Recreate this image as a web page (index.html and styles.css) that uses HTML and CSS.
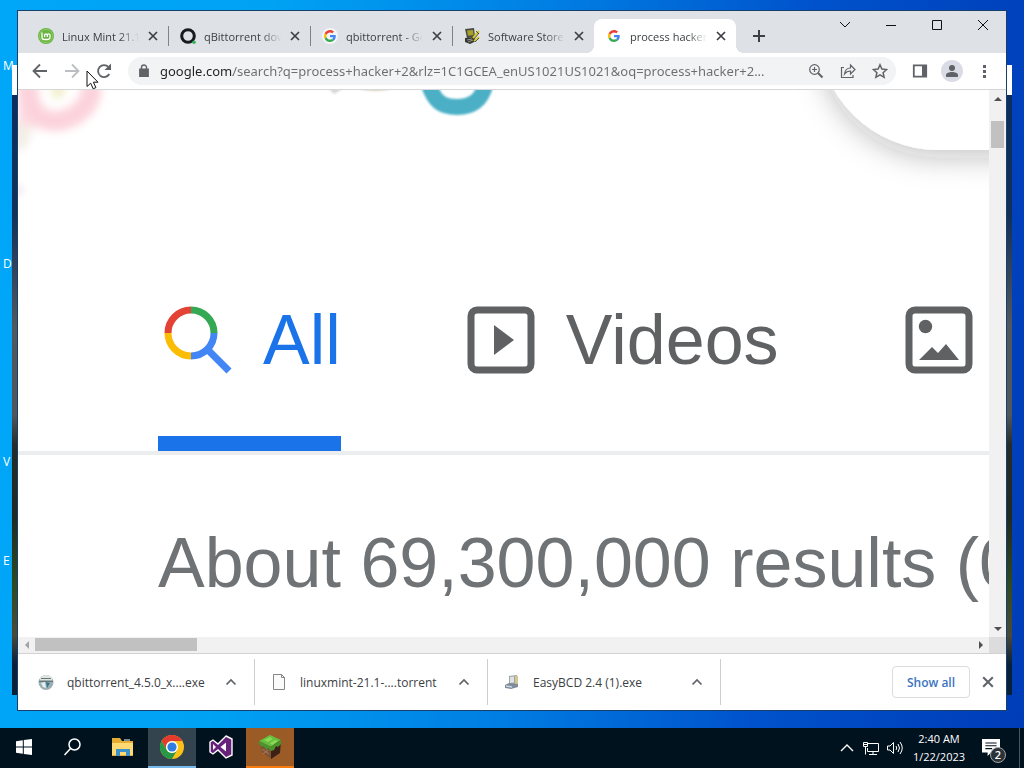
FILE: index.html
```html
<!DOCTYPE html>
<html lang="en">
<head>
    <meta charset="UTF-8">
    <meta name="viewport" content="width=device-width, initial-scale=1.0">
    <title>process hacker 2 - Google Search</title>
    <link rel="stylesheet" href="styles.css">
</head>
<body>
    <!-- Shared shapes -->
    <svg class="symbols" aria-hidden="true">
        <symbol id="google" viewBox="0 0 48 48">
            <path fill="#EA4335" d="M24 9.500c3.540 0 6.710 1.220 9.210 3.600l6.850-6.850C35.900 2.380 30.470 0 24 0 14.620 0 6.510 5.380 2.560 13.220l7.980 6.190C12.430 13.720 17.740 9.500 24 9.500z"/>
            <path fill="#4285F4" d="M46.980 24.550c0-1.570-.15-3.090-.38-4.550H24v9.020h12.940c-.58 2.960-2.260 5.480-4.780 7.180l7.730 6c4.510-4.180 7.090-10.360 7.090-17.650z"/>
            <path fill="#FBBC05" d="M10.530 28.590c-.48-1.450-.76-2.990-.76-4.590s.27-3.140.76-4.590l-7.980-6.190C.92 16.460 0 20.120 0 24s.92 7.540 2.560 10.780l7.970-6.190z"/>
            <path fill="#34A853" d="M24 48c6.480 0 11.930-2.130 15.890-5.810l-7.730-6c-2.150 1.450-4.920 2.300-8.160 2.300-6.260 0-11.570-4.220-13.470-9.910l-7.980 6.190C6.510 42.620 14.620 48 24 48z"/>
        </symbol>
        <symbol id="close" viewBox="0 0 10 10">
            <path d="M1 1l8 8M9 1L1 9" fill="none" stroke="currentColor" stroke-width="1.700"/>
        </symbol>
        <symbol id="up" viewBox="0 0 12 8">
            <path d="M1.500 6.500L6 2l4.500 4.500" fill="none" stroke="currentColor" stroke-width="1.700"/>
        </symbol>
    </svg>

    <main class="desktop">
        <div class="desktop-labels">
            <span>M</span>
            <span></span>
            <span>D</span>
            <span></span>
            <span>V</span>
            <span>E</span>
        </div>

        <div class="back-window"></div>

        <section class="browser">
            <!-- Tab strip -->
            <header class="tab-strip">
                <div class="tabs">
                    <div class="tab">
                        <svg class="favicon" viewBox="0 0 16 16">
                            <circle cx="8" cy="8" r="8" fill="#69b53f"/>
                            <circle cx="8" cy="8" r="6.600" fill="none" stroke="#a5d486" stroke-width=".6"/>
                            <path d="M4 4.500v4.700a2.300 2.300 0 0 0 2.300 2.300h3.400A2.300 2.300 0 0 0 12 9.200V7a1.400 1.400 0 0 0-2.700 0v2M9.300 7a1.400 1.400 0 0 0-2.700 0v2" fill="none" stroke="#fff" stroke-width="1.300"/>
                        </svg>
                        <span class="tab-title">Linux Mint 21.1</span>
                        <button class="tab-close" aria-label="Close tab"><svg><use href="#close"/></svg></button>
                    </div>
                    <div class="tab">
                        <svg class="favicon" viewBox="0 0 16 16">
                            <circle cx="8" cy="8" r="6.300" fill="none" stroke="#171b20" stroke-width="3"/>
                            <circle cx="14" cy="14.200" r="1.800" fill="#2fb457"/>
                        </svg>
                        <span class="tab-title">qBittorrent dow</span>
                        <button class="tab-close" aria-label="Close tab"><svg><use href="#close"/></svg></button>
                    </div>
                    <div class="tab">
                        <svg class="favicon" viewBox="-4 -4 56 56"><circle cx="24" cy="24" r="28" fill="#f4f5f7"/><use href="#google" x="3" y="3" width="42" height="42"/></svg>
                        <span class="tab-title">qbittorrent - Go</span>
                        <button class="tab-close" aria-label="Close tab"><svg><use href="#close"/></svg></button>
                    </div>
                    <div class="tab no-divider">
                        <svg class="favicon" viewBox="0 0 16 16">
                            <path d="M1 1l9-1 1 9-8 1z" fill="#4a4c42"/>
                            <path d="M3 2.500l6-.5.5 5-5.500.8z" fill="#a6a32c"/>
                            <path d="M1 10l9-1 2 4-6 3-5-2z" fill="#34362f"/>
                            <path d="M3 12l5-1M4 14l5-2" stroke="#969a8c"/>
                            <path d="M9 10l6-7M10 13l5-4" stroke="#d8c82e" stroke-width="2"/>
                            <path d="M10 11l5-6M11 14l4-4M12 3l3 3" stroke="#333" stroke-width=".8"/>
                        </svg>
                        <span class="tab-title">Software Store</span>
                        <button class="tab-close" aria-label="Close tab"><svg><use href="#close"/></svg></button>
                    </div>
                    <div class="tab active">
                        <svg class="favicon" viewBox="-4 -4 56 56"><use href="#google" x="3" y="3" width="42" height="42"/></svg>
                        <span class="tab-title">process hacker</span>
                        <button class="tab-close" aria-label="Close tab"><svg><use href="#close"/></svg></button>
                    </div>
                    <button class="new-tab" aria-label="New tab">
                        <svg width="12" height="12" viewBox="0 0 12 12"><path d="M6 0v12M0 6h12" stroke="currentColor" stroke-width="2"/></svg>
                    </button>
                </div>
                <div class="window-controls">
                    <button aria-label="Search tabs"><svg width="12" height="12" viewBox="0 0 12 12"><path d="M1 3l5 5 5-5"/></svg></button>
                    <button aria-label="Minimize"><svg width="12" height="12" viewBox="0 0 12 12"><path d="M1 6.500h10"/></svg></button>
                    <button aria-label="Maximize"><svg width="12" height="12" viewBox="0 0 12 12"><path d="M1.500 1.500h9v9h-9z"/></svg></button>
                    <button aria-label="Close"><svg width="12" height="12" viewBox="0 0 12 12"><path d="M1 1l10 10M11 1L1 11"/></svg></button>
                </div>
            </header>

            <!-- Toolbar -->
            <div class="toolbar">
                <button class="tool" aria-label="Back"><svg viewBox="0 0 16 16"><path d="M15 8H2M8 1.500L1.500 8 8 14.500"/></svg></button>
                <button class="tool disabled" aria-label="Forward" disabled><svg viewBox="0 0 16 16"><path d="M1 8h13M8 1.500L14.500 8 8 14.500"/></svg></button>
                <button class="tool" aria-label="Reload"><svg viewBox="0 0 16 16"><path d="M13.300 11A6 6 0 1 1 12.500 4"/><path d="M15 .5v6.500H8.500z" fill="currentColor" stroke="none"/></svg></button>
                <div class="omnibox">
                    <button class="tool" aria-label="View site information">
                        <svg viewBox="0 0 16 16"><path d="M4 6.500h8v6.500H4z" fill="currentColor"/><path d="M5.500 7V4.500a2.500 2.500 0 0 1 5 0V7" stroke-width="1.400"/></svg>
                    </button>
                    <input class="url" type="text" aria-label="Address and search bar" value="google.com/search?q=process+hacker+2&amp;rlz=1C1GCEA_enUS1021US1021&amp;oq=process+hacker+2...">
                    <button class="tool thin" aria-label="Zoom"><svg viewBox="0 0 16 16"><circle cx="6.500" cy="6.500" r="4.800"/><path d="M10 10l4.500 4.500" stroke-width="2"/><path d="M4 6.500h5M6.500 4v5"/></svg></button>
                    <button class="tool thin" aria-label="Share"><svg viewBox="0 0 16 16"><path d="M4 4.500H1.500v10H13V12"/><path d="M4.500 11c.5-4 2.500-6 6-6V2l4.500 4.500-4.500 4.500V8c-3 0-4.500 1-6 3z"/></svg></button>
                    <button class="tool thin" aria-label="Bookmark"><svg viewBox="0 0 16 16"><path d="M8 1.800l1.900 4.300 4.700.5-3.500 3.100 1 4.600L8 11.900l-4.100 2.400 1-4.600-3.500-3.100 4.700-.5z" stroke-width="1.500"/></svg></button>
                </div>
                <button class="tool" aria-label="Side panel"><svg viewBox="0 0 16 16"><path d="M1.800 2.300h12.400v11.400H1.800z"/><path d="M10 2h4.500v12H10z" fill="currentColor" stroke="none"/></svg></button>
                <button class="tool avatar" aria-label="You"><svg viewBox="0 0 16 16"><circle cx="8" cy="5" r="3" fill="currentColor" stroke="none"/><path d="M2 14v-2c0-2 3-3 6-3s6 1 6 3v2z" fill="currentColor" stroke="none"/></svg></button>
                <button class="tool" aria-label="Menu"><svg viewBox="0 0 16 16"><path d="M7 2h3v3H7zM7 7h3v3H7zM7 12h3v3H7z" fill="currentColor" stroke="none"/></svg></button>
            </div>

            <!-- Page -->
            <div class="viewport">
                <div class="page">
                    <svg class="doodle" aria-hidden="true">
                        <defs>
                            <filter id="soft" x="-30%" y="-50%" width="160%" height="200%"><feGaussianBlur stdDeviation="4"/></filter>
                            <filter id="edge" x="-30%" y="-50%" width="160%" height="200%"><feGaussianBlur stdDeviation="1.200"/></filter>
                            <filter id="shadow" x="-50%" y="-50%" width="200%" height="200%"><feDropShadow dx="0" dy="8" stdDeviation="14" flood-color="#202124" flood-opacity=".25"/></filter>
                        </defs>
                        <g filter="url(#soft)">
                            <path d="M-6 30L16 34 8 58-6 62z" fill="#f3eee6"/>
                            <path d="M0-12v46l22 4 4-18L14-12z" fill="#fddde3"/>
                            <path d="M10-8C8 20 22 32 38 31S77 17 73-8" fill="none" stroke="#fcd3dc" stroke-width="20"/>
                            <circle cx="40" cy="1" r="7" fill="#f1ecc4"/>
                            <circle cx="0" cy="100" r="4" fill="#dcdcea"/>
                        </g>
                        <g filter="url(#edge)">
                            <path d="M310-2h16l-10 6z" fill="#d6d6d6"/>
                            <path d="M338-2h38q-18 5-38 0z" fill="#c9b99f"/>
                            <path d="M410-8C416 12 424 17 439 17s25-6 29-25" fill="none" stroke="#4bb0c6" stroke-width="16"/>
                        </g>
                        <rect x="800" y="-180" width="900" height="240" rx="120" fill="#fff" filter="url(#shadow)"/>
                    </svg>

                    <nav class="search-nav">
                        <a href="#" class="active">
                            <svg viewBox="0 0 80 80">
                                <g fill="none" stroke-width="7">
                                    <path d="M10 33a23 23 0 0 1 23-23" stroke="#e34234"/>
                                    <path d="M33 10a23 23 0 0 1 23 23" stroke="#34a853"/>
                                    <path d="M56 33a23 23 0 0 1-23 23" stroke="#4285f4"/>
                                    <path d="M33 56a23 23 0 0 1-23-23" stroke="#fbbc04"/>
                                    <path d="M49 49l22 22" stroke="#4285f4"/>
                                </g>
                            </svg>
                            All
                        </a>
                        <a href="#">
                            <svg viewBox="0 0 80 80">
                                <rect x="10" y="10" width="60" height="60" rx="6" fill="none" stroke="currentColor" stroke-width="7"/>
                                <path d="M33 25l20 15-20 15z" fill="currentColor"/>
                            </svg>
                            Videos
                        </a>
                        <a href="#" aria-label="Images">
                            <svg viewBox="0 0 80 80">
                                <rect x="10" y="10" width="60" height="60" rx="6" fill="none" stroke="currentColor" stroke-width="7"/>
                                <circle cx="26.500" cy="26.500" r="6.700" fill="currentColor"/>
                                <path d="M20 60l13-13 6 6 8-9 13 16z" fill="currentColor"/>
                            </svg>
                        </a>
                    </nav>
                    <p class="result-stats">About 69,300,000 results (0</p>
                </div>
                <div class="scroll-y">
                    <button class="arrow arrow-up" aria-label="Scroll up"></button>
                    <div class="thumb"></div>
                    <button class="arrow arrow-down" aria-label="Scroll down"></button>
                </div>
                <div class="scroll-x">
                    <button class="arrow arrow-left" aria-label="Scroll left"></button>
                    <div class="thumb"></div>
                    <button class="arrow arrow-right" aria-label="Scroll right"></button>
                </div>
                <div class="scroll-corner"></div>
            </div>

            <!-- Downloads -->
            <footer class="downloads">
                <div class="download">
                    <svg class="file-icon" viewBox="0 0 16 16">
                        <circle cx="8" cy="8.500" r="7.500" fill="#9dafb3"/>
                        <path d="M2 3q6-4 12 0v3H2z" fill="#dfe5df"/>
                        <path d="M3 4.500h10M1 7.500h14" stroke="#6b7674"/>
                        <path d="M3 9l4-1 1 6-3-1z" fill="#e3f1f3"/>
                        <path d="M8 8l4 1-3 5z" fill="#34748c"/>
                    </svg>
                    <span class="file-name">qbittorrent_4.5.0_x....exe</span>
                    <button aria-label="Download options"><svg width="12" height="8"><use href="#up"/></svg></button>
                </div>
                <div class="download">
                    <svg class="file-icon" viewBox="0 0 16 16">
                        <path d="M2.500.5h8l3 3v12h-11z" fill="#fafafa" stroke="#858585"/>
                        <path d="M10.500.5v3h3" fill="none" stroke="#858585"/>
                    </svg>
                    <span class="file-name">linuxmint-21.1-....torrent</span>
                    <button aria-label="Download options"><svg width="12" height="8"><use href="#up"/></svg></button>
                </div>
                <div class="download">
                    <svg class="file-icon" viewBox="0 0 16 16">
                        <path d="M5 2l8-1v10l-8 1z" fill="#9ea5a6"/>
                        <path d="M6 3l4-.5v6L6 9z" fill="#dde3e4"/>
                        <path d="M11 2h3v8h-3z" fill="#d3c78d"/>
                        <path d="M1 11l4-2 9 1v3l-7 2-6-1z" fill="#7f8b99"/>
                        <path d="M2 12l6 1" stroke="#cad7e8" stroke-width="1.500"/>
                    </svg>
                    <span class="file-name">EasyBCD 2.4 (1).exe</span>
                    <button aria-label="Download options"><svg width="12" height="8"><use href="#up"/></svg></button>
                </div>
                <button class="show-all">Show all</button>
                <button class="shelf-close" aria-label="Close downloads"><svg width="12" height="12"><use href="#close"/></svg></button>
            </footer>
        </section>

        <svg class="cursor" viewBox="0 0 14 20" aria-hidden="true">
            <path d="M1 1v15.500l3.700-3.300 2.500 5.600 2.700-1.200-2.500-5.400H12z" fill="#fff" stroke="#111"/>
        </svg>
    </main>

    <!-- Taskbar -->
    <footer class="taskbar">
        <button class="task" aria-label="Start">
            <svg viewBox="0 0 24 24"><path fill="#fff" d="M3 6.200l6.800-1v6.300H3zM10.800 5L19 4v7.500h-8.200zM3 12.500h6.800v6.300l-6.800-1zM10.800 12.500H19V20l-8.200-1z"/></svg>
        </button>
        <button class="task" aria-label="Search">
            <svg viewBox="0 0 24 24" fill="none" stroke="#fff" stroke-width="1.500"><circle cx="12.500" cy="9.500" r="5.500"/><path d="M8.500 13.500L2.500 20"/></svg>
        </button>
        <button class="task" aria-label="File Explorer">
            <svg viewBox="0 0 24 24">
                <path d="M1 3h8l2 3h11v15H1z" fill="#e5ad32"/>
                <path d="M1 8h21v12H1z" fill="#ffda72"/>
                <path d="M5 21v-7h14v7h-4v-4H9v4z" fill="#3d93c9"/>
                <path d="M13 5h6" stroke="#fff"/>
            </svg>
        </button>
        <button class="task running" aria-label="Google Chrome">
            <svg viewBox="0 0 24 24">
                <circle cx="12" cy="12" r="12" fill="#fbc116"/>
                <path d="M1.600 6A12 12 0 0 1 22.400 6H12a6 6 0 0 0-5.200 9z" fill="#e33b2e"/>
                <path d="M1.600 6A12 12 0 0 0 12 24l5.200-9A6 6 0 0 1 6.800 15z" fill="#279847"/>
                <circle cx="12" cy="12" r="6" fill="#fff"/>
                <circle cx="12" cy="12" r="4.600" fill="#2f7de1"/>
            </svg>
        </button>
        <button class="task" aria-label="Visual Studio">
            <svg viewBox="0 0 24 24">
                <path d="M17 1l6 3v16l-6 3-8-8-5 4-3-2V7l3-2 5 4z" fill="#68217a" stroke="#fff" stroke-width="1.400"/>
                <path d="M17 7.500v9L11.500 12zM4 9l3 3-3 3z" fill="#fff"/>
            </svg>
        </button>
        <button class="task attention" aria-label="Game launcher">
            <svg viewBox="0 0 24 24">
                <path d="M1 6l11-6 11 5-10 7z" fill="#65bf3d"/>
                <path d="M6 5l6-3 3 2-5 3zM12 8l5-3 3 1-6 4z" fill="#8ad957"/>
                <path d="M1 6l12 6v12L4 17z" fill="#7c5334"/>
                <path d="M13 12l10-7-1 13-9 6z" fill="#3b2115"/>
                <path d="M1 6l12 6v4l-3-3-2 2-2-4-2 1-3-3zM13 12l10-7v4l-3 3-2-1-2 4-3 1z" fill="#4a962e"/>
                <path d="M4 14l7 5M10 15l-5 4" stroke="#b4785d"/>
            </svg>
        </button>

        <div class="tray">
            <button class="tray-icon" aria-label="Show hidden icons"><svg viewBox="0 0 16 16"><path d="M2 11l6-6 6 6" stroke-width="1.400"/></svg></button>
            <button class="tray-icon" aria-label="Network"><svg viewBox="0 0 16 16"><path d="M5 3.500h10.500v8H4.500V8M10 12v2.500M6 14.500h8M.5 2.500h4v4h-4zM2.500 7v7.500M.500 4.500h4"/></svg></button>
            <button class="tray-icon" aria-label="Volume"><svg viewBox="0 0 16 16"><path d="M.5 6h2.500l3.500-3.500v11L3 10H.5zM9 6q1.500 2 0 4M11 4q3 4 0 8M13 2q4.500 6 0 12"/></svg></button>
            <div class="clock">
                <time>2:40 AM</time>
                <time>1/22/2023</time>
            </div>
            <button class="notifications" aria-label="Notifications">
                <svg viewBox="0 0 16 16"><path d="M0 0h16v12H8l-3 3v-3H0z" fill="#fff"/><path d="M3 3.500h10M3 6h10M3 8.500h6" stroke="#01121f"/></svg>
                <span class="badge">2</span>
            </button>
        </div>
    </footer>
</body>
</html>
```
FILE: styles.css
```css
* {
    margin: 0;
    padding: 0;
    box-sizing: border-box;
}

:root {
    --strip: #dee1e6;
    --icon: #5f6368;
    --link: #1a73e8;
    --track: #f1f1f1;
    --thumb: #c1c1c1;
    --taskbar: #01121f;
}

body {
    display: flex;
    flex-direction: column;
    height: 100vh;
    overflow: hidden;
    font-family: "Open Sans", "Noto Sans", sans-serif;
    font-size: 12px;
    color: #3c4043;
}

button {
    display: flex;
    align-items: center;
    justify-content: center;
    flex: none;
    border: none;
    background: none;
    font-family: inherit;
    color: inherit;
}

svg {
    display: block;
    flex: none;
}

.symbols {
    position: absolute;
    width: 0;
    height: 0;
}

/* Desktop */
.desktop {
    position: relative;
    flex: 1;
    min-height: 0;
    background: linear-gradient(95deg, #00a6f8 0%, #00a2f4 25%, #0080e4 50%, #0052cc 75%, #003cb8 100%);
}

.desktop-labels {
    display: flex;
    flex-direction: column;
    padding: 16px 3px;
    color: #fff;
}

.desktop-labels span {
    height: 99px;
    line-height: 99px;
}

.back-window {
    position: absolute;
    inset: 65px 12px 33px;
    background: linear-gradient(#fff 0 30px, #0c2d5e 30px, #123058 150px, #505860 260px, #50585c 350px, #252c2a 380px, #1f2a22 450px, #2f4a20 520px, #4a4a38 570px, #082038 600px);
}

/* Browser window */
.browser {
    position: absolute;
    inset: 11px 18px 18px;
    display: flex;
    flex-direction: column;
    background: #fff;
    box-shadow: 0 0 0 1px #173f6b;
}

.tab-strip {
    display: flex;
    justify-content: space-between;
    height: 42px;
    background: var(--strip);
}

.tabs {
    display: flex;
    align-items: flex-end;
    min-width: 0;
    padding-left: 8px;
}

.tab {
    position: relative;
    display: flex;
    align-items: center;
    width: 142px;
    height: 34px;
    padding: 0 7px 0 12px;
}

.tab::after {
    content: '';
    position: absolute;
    right: -1px;
    top: 7px;
    width: 1px;
    height: 20px;
    background: #808488;
}

.tab.active {
    background: #fff;
    border-radius: 8px 8px 0 0;
}

/* Curved feet of the active tab */
.tab.active::before,
.tab.active::after {
    content: '';
    position: absolute;
    top: auto;
    bottom: 0;
    width: 8px;
    height: 8px;
}

.tab.active::before {
    left: -8px;
    background: radial-gradient(circle at 0 0, transparent 8px, #fff 8px);
}

.tab.active::after {
    right: -8px;
    background: radial-gradient(circle at 100% 0, transparent 8px, #fff 8px);
}

.tab.no-divider::after {
    display: none;
}

.favicon {
    width: 16px;
    height: 16px;
    margin-right: 8px;
}

.tab-title {
    flex: 1;
    overflow: hidden;
    font-size: 11px;
    white-space: nowrap;
    -webkit-mask-image: linear-gradient(90deg, #000 75%, transparent);
    mask-image: linear-gradient(90deg, #000 75%, transparent);
}

.tab-close {
    width: 16px;
    height: 16px;
    margin-left: 6px;
}

.tab-close svg {
    width: 10px;
    height: 10px;
}

.new-tab {
    width: 28px;
    height: 34px;
    margin-left: 9px;
}

.window-controls {
    display: flex;
    color: #111;
}

.window-controls button {
    width: 46px;
    height: 28px;
}

.window-controls path {
    fill: none;
    stroke: currentColor;
}

/* Toolbar */
.toolbar {
    display: flex;
    align-items: center;
    height: 37px;
    padding: 0 6px;
    border-bottom: 1px solid #d5d7d9;
}

.tool {
    width: 32px;
    height: 28px;
    color: var(--icon);
}

.tool svg {
    width: 16px;
    height: 16px;
    fill: none;
    stroke: currentColor;
    stroke-width: 1.8px;
}

.tool.thin svg {
    stroke-width: 1.2px;
}

.tool.disabled {
    color: #bcbec1;
}

.omnibox {
    display: flex;
    align-items: center;
    flex: 1;
    min-width: 0;
    height: 28px;
    margin: 0 8px;
    border-radius: 14px;
    background: #f1f3f4;
}

.url {
    flex: 1;
    min-width: 0;
    border: none;
    outline: none;
    font-family: "Noto Sans", sans-serif;
    font-size: 13px;
    color: transparent;
    background: linear-gradient(90deg, #202124 73px, #6a6d71 73px);
    -webkit-background-clip: text;
    background-clip: text;
}

.avatar svg {
    width: 22px;
    height: 22px;
    padding: 3px;
    border-radius: 50%;
    background: #dadce5;
}

/* Page and its scrollbars */
.viewport {
    display: grid;
    grid-template: minmax(0, 1fr) 16px / minmax(0, 1fr) 17px;
    flex: 1;
    min-height: 0;
}

.page {
    overflow: hidden;
    font-family: "Liberation Sans", Arial, sans-serif;
    font-size: 70px;
    line-height: 80px;
}

.doodle {
    width: 100%;
    height: 160px;
}

.search-nav {
    display: flex;
    gap: 120px;
    padding-left: 140px;
    border-bottom: 4px solid #ecedef;
}

.search-nav a {
    display: flex;
    gap: 25px;
    padding: 50px 0 56px;
    border-bottom: 15px solid transparent;
    color: #5f6163;
    text-decoration: none;
}

.search-nav a.active {
    color: var(--link);
    border-color: var(--link);
}

.search-nav svg {
    width: 80px;
    height: 80px;
}

.result-stats {
    padding: 68px 0 0 140px;
    color: #707375;
    white-space: nowrap;
}

.scroll-y,
.scroll-x {
    display: flex;
    background: var(--track);
}

.scroll-y {
    flex-direction: column;
    padding: 0 2px;
}

.scroll-x {
    padding: 1px 0 2px;
}

.thumb {
    background: var(--thumb);
}

.scroll-y .thumb {
    height: 27px;
    margin: 14px 0 auto;
}

.scroll-x .thumb {
    width: 162px;
    margin-right: auto;
}

.scroll-corner {
    background: #dcdcdc;
}

.arrow {
    width: 17px;
    height: 13px;
}

.scroll-y .arrow {
    width: 13px;
    height: 17px;
}

.arrow::before {
    content: '';
    border: 4px solid transparent;
}

.arrow-up::before {
    border-top: none;
    border-bottom-color: #505050;
}

.arrow-down::before {
    border-bottom: none;
    border-top-color: #505050;
}

.arrow-left::before {
    border-left: none;
    border-right-color: #a3a3a3;
}

.arrow-right::before {
    border-right: none;
    border-left-color: #505050;
}

/* Download shelf */
.downloads {
    display: flex;
    align-items: center;
    height: 57px;
    padding: 0 8px 0 4px;
    border-top: 1px solid #d0d2d4;
}

.download {
    display: flex;
    align-items: center;
    width: 233px;
    height: 46px;
    padding: 0 11px 0 16px;
    border-right: 1px solid #ccced1;
}

.file-icon {
    width: 16px;
    height: 16px;
    margin-right: 13px;
}

.file-name {
    flex: 1;
    white-space: nowrap;
}

.download button {
    width: 24px;
    height: 24px;
    color: var(--icon);
}

.show-all {
    width: 78px;
    height: 32px;
    margin-left: auto;
    border: 1px solid #dadce0;
    border-radius: 4px;
    font-size: 12px;
    font-weight: 600;
    color: #3b74c0;
}

.shelf-close {
    width: 20px;
    height: 20px;
    margin-left: 8px;
    color: var(--icon);
}

.cursor {
    position: absolute;
    left: 86px;
    top: 70px;
    width: 14px;
    height: 20px;
}

/* Taskbar */
.taskbar {
    display: flex;
    gap: 1px;
    height: 40px;
    padding: 0 4px 0 1px;
    background: var(--taskbar);
    color: #fff;
}

.task {
    width: 48px;
    border-bottom: 2px solid transparent;
}

.task svg {
    width: 24px;
    height: 24px;
}

.task.running {
    background: #33444f;
    border-color: #76b9ed;
}

.task.attention {
    background: #9a5b26;
    border-color: #f57a10;
}

.tray {
    display: flex;
    align-items: center;
    margin-left: auto;
    border-right: 1px solid #4a5560;
}

.tray-icon {
    width: 24px;
    height: 40px;
}

.tray-icon svg {
    width: 16px;
    height: 16px;
    fill: none;
    stroke: #fff;
}

.clock {
    display: flex;
    flex-direction: column;
    width: 64px;
    font-size: 11px;
    line-height: 18px;
    text-align: center;
}

.notifications {
    position: relative;
    width: 48px;
    height: 40px;
    padding-right: 8px;
}

.notifications svg {
    width: 18px;
    height: 18px;
}

.badge {
    position: absolute;
    left: 19px;
    top: 19px;
    width: 16px;
    height: 16px;
    border: 1px solid #a0a6aa;
    border-radius: 50%;
    background: #2b3238;
    font-size: 11px;
    font-weight: 600;
    line-height: 14px;
}
```
